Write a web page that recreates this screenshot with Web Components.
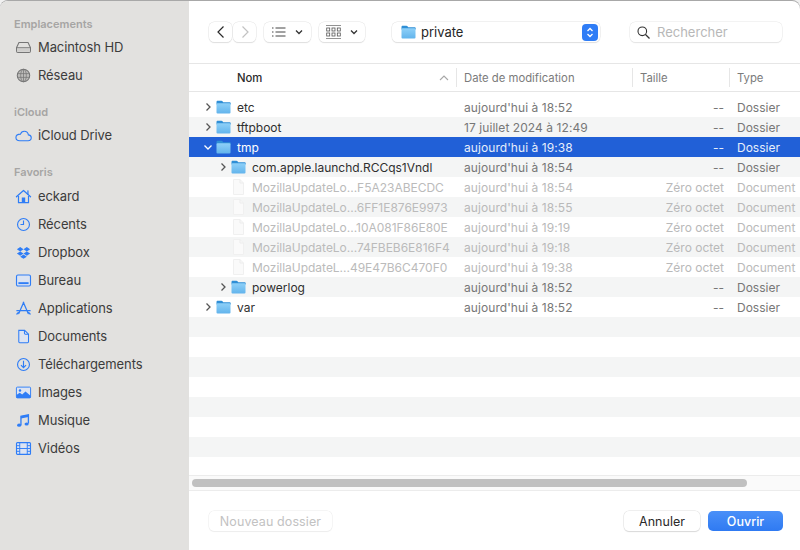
<!DOCTYPE html>
<html lang="fr">
<head>
<meta charset="utf-8">
<title>private</title>
<style>
  html, body { margin: 0; height: 100%; overflow: hidden; background: #f0f0f0; }
  body { font-family: Inter, "Liberation Sans", sans-serif; }
</style>
</head>
<body>
<template id="folder-tpl">
  <svg width="15" height="14" viewBox="0 0 15 14">
    <defs><linearGradient id="fg" x1="0" y1="0" x2="0" y2="1"><stop offset="0" stop-color="#8ed0f8"/><stop offset="1" stop-color="#62b4ec"/></linearGradient></defs>
    <path d="M.5 2.2C.5 1.3 1 .8 1.8.8h3.6c.6 0 .9.2 1.3.7l.5.7h6.3c.8 0 1.2.5 1.2 1.2v1H.5z" fill="#2f8fd6"/>
    <rect x=".5" y="3.3" width="14" height="10.2" rx="1.1" fill="url(#fg)"/>
  </svg>
</template>

<file-dialog>
  <side-bar slot="side">
    <side-section label="Emplacements">
      <side-item icon="disk">Macintosh HD</side-item>
      <side-item icon="globe">Réseau</side-item>
    </side-section>
    <side-section label="iCloud">
      <side-item icon="cloud">iCloud Drive</side-item>
    </side-section>
    <side-section label="Favoris">
      <side-item icon="home">eckard</side-item>
      <side-item icon="clock">Récents</side-item>
      <side-item icon="dropbox">Dropbox</side-item>
      <side-item icon="desktop">Bureau</side-item>
      <side-item icon="apps">Applications</side-item>
      <side-item icon="doc">Documents</side-item>
      <side-item icon="download">Téléchargements</side-item>
      <side-item icon="images">Images</side-item>
      <side-item icon="music">Musique</side-item>
      <side-item icon="film">Vidéos</side-item>
    </side-section>
  </side-bar>

  <tool-bar></tool-bar>
  <column-head></column-head>

  <file-list>
    <file-row kind="folder" arrow="right" date="aujourd'hui à 18:52" size="--" type="Dossier">etc</file-row>
    <file-row kind="folder" arrow="right" date="17 juillet 2024 à 12:49" size="--" type="Dossier">tftpboot</file-row>
    <file-row kind="folder" arrow="down" selected date="aujourd'hui à 19:38" size="--" type="Dossier">tmp</file-row>
    <file-row kind="folder" arrow="right" level="1" date="aujourd'hui à 18:54" size="--" type="Dossier">com.apple.launchd.RCCqs1Vndl</file-row>
    <file-row kind="file" level="1" date="aujourd'hui à 18:54" size="Zéro octet" type="Document">MozillaUpdateLo...F5A23ABECDC</file-row>
    <file-row kind="file" level="1" date="aujourd'hui à 18:55" size="Zéro octet" type="Document">MozillaUpdateLo...6FF1E876E9973</file-row>
    <file-row kind="file" level="1" date="aujourd'hui à 19:19" size="Zéro octet" type="Document">MozillaUpdateLo...10A081F86E80E</file-row>
    <file-row kind="file" level="1" date="aujourd'hui à 19:18" size="Zéro octet" type="Document">MozillaUpdateLo...74FBEB6E816F4</file-row>
    <file-row kind="file" level="1" date="aujourd'hui à 19:38" size="Zéro octet" type="Document">MozillaUpdateL...49E47B6C470F0</file-row>
    <file-row kind="folder" arrow="right" level="1" date="aujourd'hui à 18:52" size="--" type="Dossier">powerlog</file-row>
    <file-row kind="folder" arrow="right" date="aujourd'hui à 18:52" size="--" type="Dossier">var</file-row>
    <file-row></file-row><file-row></file-row><file-row></file-row><file-row></file-row>
    <file-row></file-row><file-row></file-row><file-row></file-row><file-row></file-row>
  </file-list>

  <scroll-track></scroll-track>
  <foot-bar></foot-bar>
</file-dialog>

<script>
// sidebar icons, all drawn on a 18x18 box
const BLUE = '#2f7df6';
const ICONS = {
  disk: `<g fill="none" stroke="#767676" stroke-width="1.1"><path d="M4.2 3.8h9.6l2.6 5.4v3.6c0 .9-.6 1.5-1.5 1.5H3.1c-.9 0-1.5-.6-1.5-1.5V9.2z"/><path d="M1.8 9.4h14.4"/></g><path d="M2.2 9.8h13.6v3.6H2.2z" fill="#cfcecc"/>`,
  globe: `<g fill="none" stroke="#767676"><circle cx="9" cy="9" r="6.6" fill="#bdbcba" stroke-width="1.1"/><ellipse cx="9" cy="9" rx="3" ry="6.6" stroke-width=".8"/><path d="M2.6 7h12.8M2.6 11h12.8M9 2.4v13.2" stroke-width=".8"/></g>`,
  cloud: `<path d="M5 14.5h8.8c2 0 3.4-1.4 3.4-3.1 0-1.7-1.3-3-3-3.1C13.7 6 11.9 4.5 9.9 4.5c-2 0-3.6 1.3-4.1 3.1C3 7.7 1 9 1 11.1c0 2 1.700 3.400 4 3.400z" fill="none" stroke="${BLUE}" stroke-width="1.2"/>`,
  home: `<path d="M1.500 9.300L9 2.600l7.500 6.700" fill="none" stroke="${BLUE}" stroke-width="1.300" stroke-linecap="round" stroke-linejoin="round"/><path d="M13.700 3v3.500" stroke="${BLUE}" stroke-width="1.300" stroke-linecap="round"/><path d="M3.700 8.500v6.900h10.600V8.500" fill="none" stroke="${BLUE}" stroke-width="1.300"/><path d="M7.200 10h3.600v5.400H7.200z" fill="${BLUE}"/>`,
  clock: `<circle cx="9" cy="9" r="6.300" fill="none" stroke="${BLUE}" stroke-width="1.200"/><path d="M9 4.800V9H5.800" fill="none" stroke="${BLUE}" stroke-width="1.200"/>`,
  dropbox: `<svg x="2" y="2.300" width="14" height="14" viewBox="0 0 24 24"><path d="M6 1.500L0 5.500l6 4 6-4zM18 1.500l-6 4 6 4 6-4zM0 13.500l6 4 6-4-6-4zM18 9.500l-6 4 6 4 6-4zM6 19l6 4 6-4-6-4z" fill="${BLUE}"/></svg>`,
  desktop: `<rect x="1.600" y="3.200" width="14.800" height="11.600" rx="1.500" fill="#dbe3f2" stroke="${BLUE}" stroke-width="1.200"/><rect x="3.600" y="10.800" width="10.800" height="2" fill="${BLUE}"/>`,
  apps: `<g fill="none" stroke="${BLUE}" stroke-width="1.300" stroke-linecap="round"><path d="M9.200 2.400L4 14.400M8.800 2.400l5.200 12M2 11.300h14"/><path d="M2 14.800l1.600-1.600M16 14.800l-1.600-1.600"/></g>`,
  doc: `<path d="M4 2.500h6.200L14.300 6.600v8c0 .6-.4 1-1 1H5c-.6 0-1-.4-1-1z" fill="#dde4f2" stroke="${BLUE}" stroke-width="1.100"/><path d="M10 2.500v3.100c0 .6.4 1 1 1h3.300" fill="none" stroke="${BLUE}" stroke-width="1.100"/>`,
  download: `<circle cx="9" cy="9" r="6.300" fill="none" stroke="${BLUE}" stroke-width="1.200"/><path d="M9 5v7.200M6.300 9.600L9 12.300l2.700-2.700" fill="none" stroke="${BLUE}" stroke-width="1.200"/>`,
  images: `<rect x="1.500" y="3.300" width="15" height="11.400" rx="1" fill="#dde4f2" stroke="${BLUE}" stroke-width="1"/><circle cx="5.300" cy="6.800" r="1.300" fill="${BLUE}"/><path d="M1.500 14.700v-3l3.500-2.400 2.600 1.800 3.500-3.100 5.400 4.400v2.300z" fill="${BLUE}"/>`,
  music: `<path d="M6.300 13.700V4.500l7.900-1.500v9.300" fill="none" stroke="${BLUE}" stroke-width="1.400"/><ellipse cx="4.400" cy="14" rx="2.200" ry="1.700" fill="${BLUE}"/><ellipse cx="12.300" cy="12.700" rx="2.200" ry="1.700" fill="${BLUE}"/><path d="M6.300 4.500l7.900-1.500v2.400L6.300 6.900z" fill="${BLUE}"/>`,
  film: `<rect x="1.600" y="2.800" width="14.800" height="12.400" rx="1" fill="#dde4f2" stroke="${BLUE}" stroke-width="1.200"/><path d="M5 2.800v12.400M13 2.800v12.400M5 9h8M1.600 6h3.400M1.600 9h3.400M1.600 12h3.400M13 6h3.400M13 9h3.400M13 12h3.400" fill="none" stroke="${BLUE}" stroke-width="1"/>`
};

function chevron(dir, color) {
  const d = dir === 'down' ? 'M1.500 3.500L5 7l3.500-3.500' : 'M3.500 1.500L7 5 3.500 8.500';
  return `<svg width="10" height="10" viewBox="0 0 10 10"><path d="${d}" fill="none" stroke="${color}" stroke-width="1.300"/></svg>`;
}

class FileDialog extends HTMLElement {
  constructor() {
    super();
    this.attachShadow({ mode: 'open' });
    this.shadowRoot.innerHTML = `
      <style>
        :host {
          display: grid;
          grid-template-columns: 189px 1fr;
          height: 549px;
          margin-top: 1px;
          border-radius: 8px 8px 0 0;
          overflow: hidden;
          background: #fff;
          box-shadow: 0 -1px 0 #a8a8a8;
        }
        .main { display: flex; flex-direction: column; min-width: 0; height: 549px; }
      </style>
      <slot name="side"></slot>
      <div class="main"><slot></slot></div>
    `;
  }
}

class SideBar extends HTMLElement {
  constructor() {
    super();
    this.attachShadow({ mode: 'open' });
    this.shadowRoot.innerHTML = `
      <style>
        :host {
          display: flex;
          flex-direction: column;
          gap: 14px;
          padding-top: 14px;
          background: #e2e1df;
        }
      </style>
      <slot></slot>
    `;
  }
}

class SideSection extends HTMLElement {
  constructor() {
    super();
    this.attachShadow({ mode: 'open' });
    this.shadowRoot.innerHTML = `
      <style>
        :host { display: block; }
        .label {
          height: 18px;
          line-height: 18px;
          padding-left: 14px;
          font-size: 11px;
          font-weight: 600;
          color: #a6a5a4;
        }
        :host([label="Favoris"]) .label { height: 19px; }
      </style>
      <div class="label">${this.getAttribute('label')}</div>
      <slot></slot>
    `;
  }
}

class SideItem extends HTMLElement {
  constructor() {
    super();
    this.attachShadow({ mode: 'open' });
    this.shadowRoot.innerHTML = `
      <style>
        :host {
          display: flex;
          align-items: center;
          gap: 6px;
          height: 28px;
          padding-left: 15px;
          font-size: 13px;
          letter-spacing: -.1px;
          color: #3c3c3c;
        }
        svg { flex: none; }
      </style>
      <svg width="17" height="17" viewBox="0 0 18 18">${ICONS[this.getAttribute('icon')]}</svg>
      <span><slot></slot></span>
    `;
  }
}

class ToolBar extends HTMLElement {
  constructor() {
    super();
    this.attachShadow({ mode: 'open' });
    this.shadowRoot.innerHTML = `
      <style>
        :host {
          display: flex;
          align-items: center;
          flex: none;
          box-sizing: border-box;
          height: 63px;
          padding: 0 18px 0 20px;
          border-bottom: 1px solid #e6e6e6;
        }
        .btn {
          display: flex;
          align-items: center;
          justify-content: center;
          box-sizing: border-box;
          height: 20px;
          background: #fff;
          border-radius: 5.500px;
          box-shadow: 0 0 0 .5px #e4e4e4, 0 1px 1px #dcdcdc;
        }
        .nav { width: 23px; }
        .view { gap: 9px; }
        .path {
          display: flex;
          align-items: center;
          box-sizing: border-box;
          width: 208px;
          height: 20px;
          margin-left: 27px;
          padding: 0 2px 0 9px;
          background: #fff;
          border-radius: 5.500px;
          box-shadow: 0 0 0 .5px #e4e4e4, 0 1px 1px #dcdcdc;
          font-size: 13px;
          color: #262626;
        }
        .path span { margin-left: 5px; flex: 1; }
        .stepper {
          display: flex;
          align-items: center;
          justify-content: center;
          width: 16px;
          height: 17px;
          border-radius: 4px;
          background: #2f7df6;
        }
        .search {
          display: flex;
          align-items: center;
          gap: 7px;
          box-sizing: border-box;
          width: 152px;
          height: 20px;
          margin-left: auto;
          padding-left: 7px;
          background: #fff;
          border-radius: 5.500px;
          box-shadow: 0 0 0 .5px #e8e8e8, 0 1px 1px #e2e2e2;
          font-size: 13px;
          color: #b8b8b8;
        }
      </style>
      <div class="btn nav" style="margin-right:1px">
        <svg width="10" height="14" viewBox="0 0 10 14"><path d="M7.500 1.500L2 7l5.500 5.500" fill="none" stroke="#2a2a2a" stroke-width="1.200"/></svg>
      </div>
      <div class="btn nav">
        <svg width="10" height="14" viewBox="0 0 10 14"><path d="M2.500 1.500L8 7l-5.500 5.500" fill="none" stroke="#c2c2c2" stroke-width="1.200"/></svg>
      </div>
      <div class="btn view" style="margin-left:8px;width:47px">
        <svg width="14" height="10" viewBox="0 0 14 10"><path d="M3.500 1h10M3.500 5h10M3.500 9h10M0 1h1.500M0 5h1.500M0 9h1.500" stroke="#444" stroke-width="1"/></svg>
        <svg width="8" height="6" viewBox="0 0 8 6"><path d="M1 1.500l3 3 3-3" fill="none" stroke="#333" stroke-width="1.300"/></svg>
      </div>
      <div class="btn view" style="margin-left:8px;width:46px">
        <svg width="15" height="14" viewBox="0 0 15 14">
          <path d="M0 .5h15M0 13.500h15" stroke="#777" stroke-width=".8"/>
          <g fill="none" stroke="#555" stroke-width=".8">
            <rect x=".7" y="3" width="3" height="3"/><rect x="6" y="3" width="3" height="3"/><rect x="11.300" y="3" width="3" height="3"/>
            <rect x=".7" y="8" width="3" height="3"/><rect x="6" y="8" width="3" height="3"/><rect x="11.300" y="8" width="3" height="3"/>
          </g>
        </svg>
        <svg width="8" height="6" viewBox="0 0 8 6"><path d="M1 1.500l3 3 3-3" fill="none" stroke="#333" stroke-width="1.300"/></svg>
      </div>
      <div class="path">
        ${document.getElementById('folder-tpl').innerHTML}
        <span>private</span>
        <div class="stepper">
          <svg width="10" height="13" viewBox="0 0 10 13"><path d="M2.500 5L5 2.500 7.500 5M2.500 8L5 10.500 7.500 8" fill="none" stroke="#fff" stroke-width="1.300"/></svg>
        </div>
      </div>
      <div class="search">
        <svg width="13" height="13" viewBox="0 0 13 13"><circle cx="5.300" cy="5.300" r="4.300" fill="none" stroke="#333" stroke-width="1.100"/><path d="M8.500 8.500l4 4" stroke="#333" stroke-width="1.300"/></svg>
        <span>Rechercher</span>
      </div>
    `;
  }
}

class ColumnHead extends HTMLElement {
  constructor() {
    super();
    this.attachShadow({ mode: 'open' });
    this.shadowRoot.innerHTML = `
      <style>
        :host {
          display: grid;
          grid-template-columns: 267px 176px 97px 1fr;
          flex: none;
          box-sizing: border-box;
          height: 28px;
          border-bottom: 1px solid #e6e6e6;
          font-size: 11.300px;
          color: #7b7b7b;
        }
        div { display: flex; align-items: center; margin: 4px 0; }
        div + div { border-left: 1px solid #e6e6e6; box-sizing: border-box; }
        .name { justify-content: space-between; padding: 0 7px 0 48px; font-weight: 500; color: #2c2c2c; }
        .date { padding-left: 7px; }
        .size, .type { padding-left: 7px; }
      </style>
      <div class="name">Nom
        <svg width="10" height="6" viewBox="0 0 10 6"><path d="M1 5l4-4 4 4" fill="none" stroke="#a8a8a8" stroke-width="1.100"/></svg>
      </div>
      <div class="date">Date de modification</div>
      <div class="size">Taille</div>
      <div class="type">Type</div>
    `;
  }
}

class FileList extends HTMLElement {
  constructor() {
    super();
    this.attachShadow({ mode: 'open' });
    this.shadowRoot.innerHTML = `
      <style>
        :host {
          display: block;
          flex: 1;
          min-height: 0;
          padding-top: 5px;
          overflow: hidden;
        }
      </style>
      <slot></slot>
    `;
  }
}

class FileRow extends HTMLElement {
  constructor() {
    super();
    this.attachShadow({ mode: 'open' });
    const kind = this.getAttribute('kind');
    const level = Number(this.getAttribute('level') || 0);
    const arrow = this.getAttribute('arrow');
    const selected = this.hasAttribute('selected');
    let icon = '';
    if (kind === 'folder') {
      icon = document.getElementById('folder-tpl').innerHTML;
    } else if (kind === 'file') {
      icon = `<svg width="15" height="16" viewBox="0 0 15 16"><path d="M2.500 .5h6.500l3.500 3.500v11.500h-10z" fill="#fafafa" stroke="#f0f0f0"/><path d="M9 .5V4h3.500" fill="none" stroke="#ececec"/></svg>`;
    }
    this.shadowRoot.innerHTML = `
      <style>
        :host {
          display: grid;
          grid-template-columns: 267px 176px 97px 1fr;
          align-items: center;
          height: 20px;
          font-size: 12px;
          color: #777;
        }
        :host(:nth-child(even)) { background: #f4f5f5; }
        :host([selected]) { background: #2160d7; color: #e6eefb; }
        :host([kind="file"]) { color: #b9b9b9; }
        .name {
          display: flex;
          align-items: center;
          height: 20px;
          padding-left: ${14 + level * 15}px;
          color: ${kind === 'file' ? '#bbb' : selected ? '#fff' : '#2f2f2f'};
        }
        .arrow { flex: none; display: flex; width: 13px; }
        .name svg { flex: none; }
        .label { margin-left: 6px; white-space: nowrap; letter-spacing: -.02px; }
        .date { padding-left: 8px; white-space: nowrap; letter-spacing: .07px; }
        .size { padding-right: 5px; text-align: right; white-space: nowrap; }
        .type { padding-left: 8px; white-space: nowrap; }
      </style>
      <div class="name">
        <span class="arrow">${arrow ? chevron(arrow, selected ? '#fff' : '#555') : ''}</span>
        ${icon}
        <span class="label"><slot></slot></span>
      </div>
      <div class="date">${this.getAttribute('date') || ''}</div>
      <div class="size">${this.getAttribute('size') || ''}</div>
      <div class="type">${this.getAttribute('type') || ''}</div>
    `;
  }
}

class ScrollTrack extends HTMLElement {
  constructor() {
    super();
    this.attachShadow({ mode: 'open' });
    this.shadowRoot.innerHTML = `
      <style>
        :host {
          display: block;
          flex: none;
          box-sizing: border-box;
          height: 16px;
          padding: 3px 53px 3px 3px;
          background: #fafafa;
          border-top: 1px solid #ececec;
          border-bottom: 1px solid #ececec;
        }
        div { height: 8px; border-radius: 4px; background: #c0c0c0; }
      </style>
      <div></div>
    `;
  }
}

class FootBar extends HTMLElement {
  constructor() {
    super();
    this.attachShadow({ mode: 'open' });
    this.shadowRoot.innerHTML = `
      <style>
        :host {
          display: flex;
          align-items: center;
          flex: none;
          box-sizing: border-box;
          height: 59px;
          padding: 1px 17px 0 20px;
          font-size: 12.500px;
        }
        .btn {
          display: flex;
          align-items: center;
          justify-content: center;
          box-sizing: border-box;
          height: 20px;
          border-radius: 5px;
          background: #fff;
        }
        .new { width: 123px; color: #c2c2c2; letter-spacing: .1px; box-shadow: 0 0 0 .5px #ececec, 0 1px 1px #f0f0f0; }
        .cancel { width: 76px; margin-left: auto; color: #2a2a2a; box-shadow: 0 0 0 .5px #e0e0e0, 0 1px 1px #d4d4d4; }
        .ok { width: 75px; margin-left: 8px; color: #fff; background: linear-gradient(#4a90f8, #2f7af2); font-weight: 500; }
      </style>
      <div class="btn new">Nouveau dossier</div>
      <div class="btn cancel">Annuler</div>
      <div class="btn ok">Ouvrir</div>
    `;
  }
}

customElements.define('file-dialog', FileDialog);
customElements.define('side-bar', SideBar);
customElements.define('side-section', SideSection);
customElements.define('side-item', SideItem);
customElements.define('tool-bar', ToolBar);
customElements.define('column-head', ColumnHead);
customElements.define('file-list', FileList);
customElements.define('file-row', FileRow);
customElements.define('scroll-track', ScrollTrack);
customElements.define('foot-bar', FootBar);
</script>
</body>
</html>
